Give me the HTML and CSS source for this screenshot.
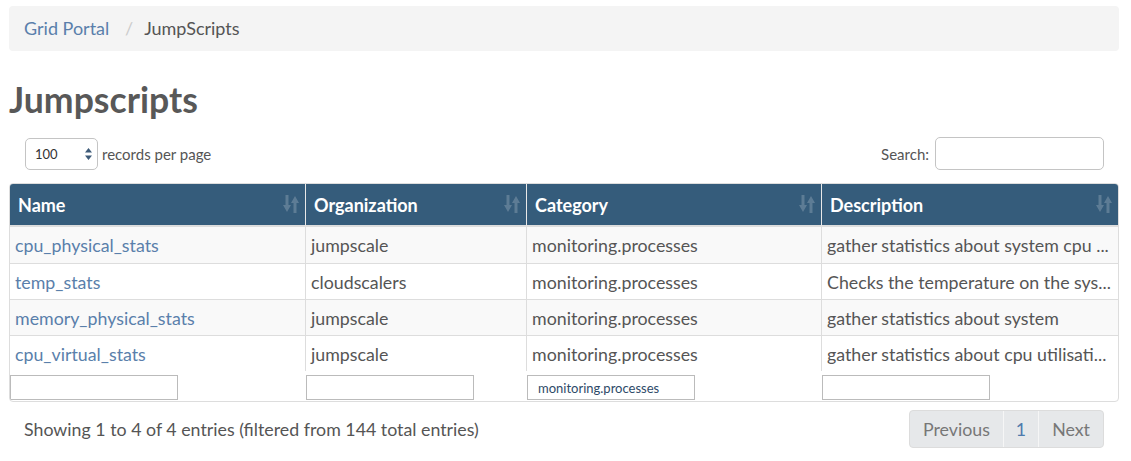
FILE: index.html
```html
<!DOCTYPE html>
<html>
<head>
<meta charset="utf-8">
<title>Jumpscripts</title>
<link rel="stylesheet" href="styles.css">
</head>
<body>
<div class="page">
  <nav class="breadcrumb">
    <a class="crumb-link" href="#">Grid Portal</a>
    <span class="crumb-sep">/</span>
    <span class="crumb-current">JumpScripts</span>
  </nav>

  <h1 class="title">Jumpscripts</h1>

  <div class="controls">
    <div class="length">
      <div class="select-wrap">
        <select class="select"><option>100</option></select>
        <svg class="select-arrows" width="7" height="12" viewBox="0 0 7 12"><path d="M3.5 0 L7 4.5 H0 Z M3.5 12 L7 7.5 H0 Z" fill="#3d5a78"/></svg>
      </div>
      <span class="length-label">records per page</span>
    </div>
    <label class="search">Search: <input class="search-input" type="text"></label>
  </div>

  <div class="table-wrap">
    <table class="grid">
      <colgroup>
        <col class="c1"><col class="c2"><col class="c3"><col class="c4">
      </colgroup>
      <thead>
        <tr>
          <th><span>Name</span><svg class="sort" width="16" height="18" viewBox="0 0 16 18"><path d="M2.5 0 H5.5 V10 H8 L4 17 L0 10 H2.5 Z M10.5 18 H13.5 V8 H16 L12 1 L8 8 H10.5 Z"/></svg></th>
          <th><span>Organization</span><svg class="sort" width="16" height="18" viewBox="0 0 16 18"><path d="M2.5 0 H5.5 V10 H8 L4 17 L0 10 H2.5 Z M10.5 18 H13.5 V8 H16 L12 1 L8 8 H10.5 Z"/></svg></th>
          <th><span>Category</span><svg class="sort" width="16" height="18" viewBox="0 0 16 18"><path d="M2.5 0 H5.5 V10 H8 L4 17 L0 10 H2.5 Z M10.5 18 H13.5 V8 H16 L12 1 L8 8 H10.5 Z"/></svg></th>
          <th><span>Description</span><svg class="sort" width="16" height="18" viewBox="0 0 16 18"><path d="M2.5 0 H5.5 V10 H8 L4 17 L0 10 H2.5 Z M10.5 18 H13.5 V8 H16 L12 1 L8 8 H10.5 Z"/></svg></th>
        </tr>
      </thead>
      <tbody>
        <tr class="odd">
          <td><a href="#">cpu_physical_stats</a></td>
          <td>jumpscale</td>
          <td>monitoring.processes</td>
          <td>gather statistics about system cpu ...</td>
        </tr>
        <tr>
          <td><a href="#">temp_stats</a></td>
          <td>cloudscalers</td>
          <td>monitoring.processes</td>
          <td>Checks the temperature on the sys...</td>
        </tr>
        <tr class="odd">
          <td><a href="#">memory_physical_stats</a></td>
          <td>jumpscale</td>
          <td>monitoring.processes</td>
          <td>gather statistics about system</td>
        </tr>
        <tr>
          <td><a href="#">cpu_virtual_stats</a></td>
          <td>jumpscale</td>
          <td>monitoring.processes</td>
          <td>gather statistics about cpu utilisati...</td>
        </tr>
      </tbody>
      <tfoot>
        <tr>
          <td><input class="filter" type="text"></td>
          <td><input class="filter" type="text"></td>
          <td><input class="filter" type="text" value="monitoring.processes"></td>
          <td><input class="filter" type="text"></td>
        </tr>
      </tfoot>
    </table>
  </div>

  <div class="footer">
    <div class="info">Showing 1 to 4 of 4 entries (filtered from 144 total entries)</div>
    <div class="pager">
      <span class="pg">Previous</span>
      <span class="pg pg-current">1</span>
      <span class="pg">Next</span>
    </div>
  </div>
</div>
</body>
</html>
```

FILE: styles.css
```css
html, body {
  margin: 0;
  padding: 0;
  background: #fff;
}

body {
  font-family: Lato, "Open Sans", "Liberation Sans", sans-serif;
  color: #555;
  font-size: 17.8px;
}

.page {
  padding: 6px 12px 0 9px;
}

a {
  color: #5a7fab;
  text-decoration: none;
}

.breadcrumb {
  height: 45px;
  line-height: 45px;
  background: #f4f4f4;
  border-radius: 4px;
  padding: 0 15px;
  font-size: 18px;
}

.crumb-link {
  color: #5a7fab;
}

.crumb-sep {
  color: #ccc;
  padding: 0 7px 0 11px;
}

.crumb-current {
  color: #555;
}

.title {
  margin: 29px 0 0 0;
  font-size: 35.6px;
  line-height: 40px;
  font-weight: 700;
  color: #585858;
}

.controls {
  margin-top: 17px;
  height: 33px;
  display: flex;
  align-items: center;
  justify-content: space-between;
  padding: 0 15px 0 16px;
}

.length {
  display: flex;
  align-items: center;
  gap: 4px;
}

.select-wrap {
  position: relative;
  width: 73px;
  height: 32px;
}

.select {
  appearance: none;
  -webkit-appearance: none;
  width: 73px;
  height: 32px;
  box-sizing: border-box;
  border: 1.5px solid #c4c4c4;
  border-radius: 5px;
  background: #fff;
  font-family: Lato, "Liberation Sans", sans-serif;
  font-size: 13px;
  color: #333;
  padding: 0 0 0 9px;
  margin: 0;
}

.select-arrows {
  position: absolute;
  right: 6px;
  top: 10px;
}

.length-label,
.search {
  font-size: 15px;
  color: #555;
}

.search {
  display: flex;
  align-items: center;
  gap: 6px;
}

.search-input {
  width: 169px;
  height: 33px;
  box-sizing: border-box;
  border: 1.5px solid #c4c4c4;
  border-radius: 5px;
  margin: 0;
}

.table-wrap {
  margin-top: 13px;
  border: 1px solid #ddd;
  border-radius: 4px;
  overflow: hidden;
}

.grid {
  width: 1108px;
  table-layout: fixed;
  border-collapse: separate;
  border-spacing: 0;
}

.c1 { width: 295px; }
.c2 { width: 221px; }
.c3 { width: 295px; }
.c4 { width: 297px; }

.grid th {
  background: #355c7b;
  color: #fff;
  font-weight: 700;
  font-size: 18px;
  text-align: left;
  height: 43px;
  padding: 0 8px;
  border-bottom: 2px solid #ddd;
  box-sizing: border-box;
  position: relative;
  vertical-align: middle;
}

.grid th + th {
  border-left: 1px solid #e8e8e8;
}

.sort {
  position: absolute;
  right: 6px;
  top: 11px;
  fill: rgba(255, 255, 255, 0.2);
}

.grid tbody td {
  height: 36px;
  padding: 0 2px 0 5px;
  box-sizing: border-box;
  border-top: 1px solid #ddd;
  white-space: nowrap;
  overflow: hidden;
  vertical-align: middle;
}

.grid tbody tr:first-child td {
  border-top: none;
}

.grid tbody td + td {
  border-left: 1px solid #ddd;
}

.grid tbody tr.odd td {
  background: #f9f9f9;
}

.grid tfoot td {
  padding: 4px 0 1px 0;
  height: 30px;
  box-sizing: border-box;
  vertical-align: top;
}

.grid tfoot td + td {
  border-left: 1px solid transparent;
}

.filter {
  display: block;
  width: 168px;
  height: 25px;
  box-sizing: border-box;
  border: 1px solid #bbb;
  margin: 0;
  padding: 0 10px;
  font-family: Lato, "Liberation Sans", sans-serif;
  font-size: 13px;
  color: #2e4a68;
  background: #fff;
}

.footer {
  display: flex;
  justify-content: space-between;
  align-items: center;
  margin-top: 8px;
  padding: 0 15px 0 15px;
}

.info {
  color: #555;
}

.pager {
  display: flex;
  height: 38px;
  border: 1px solid #dcdcdc;
  border-radius: 4px;
  overflow: hidden;
  background: #e6e8ea;
  box-sizing: border-box;
}

.pg {
  display: flex;
  align-items: center;
  padding: 0 13px;
  color: #777;
}

.pg-current {
  padding: 0 12px;
}

.pg + .pg {
  border-left: 1px solid #f6f6f6;
}

.pg-current {
  color: #4f7bad;
}
```
